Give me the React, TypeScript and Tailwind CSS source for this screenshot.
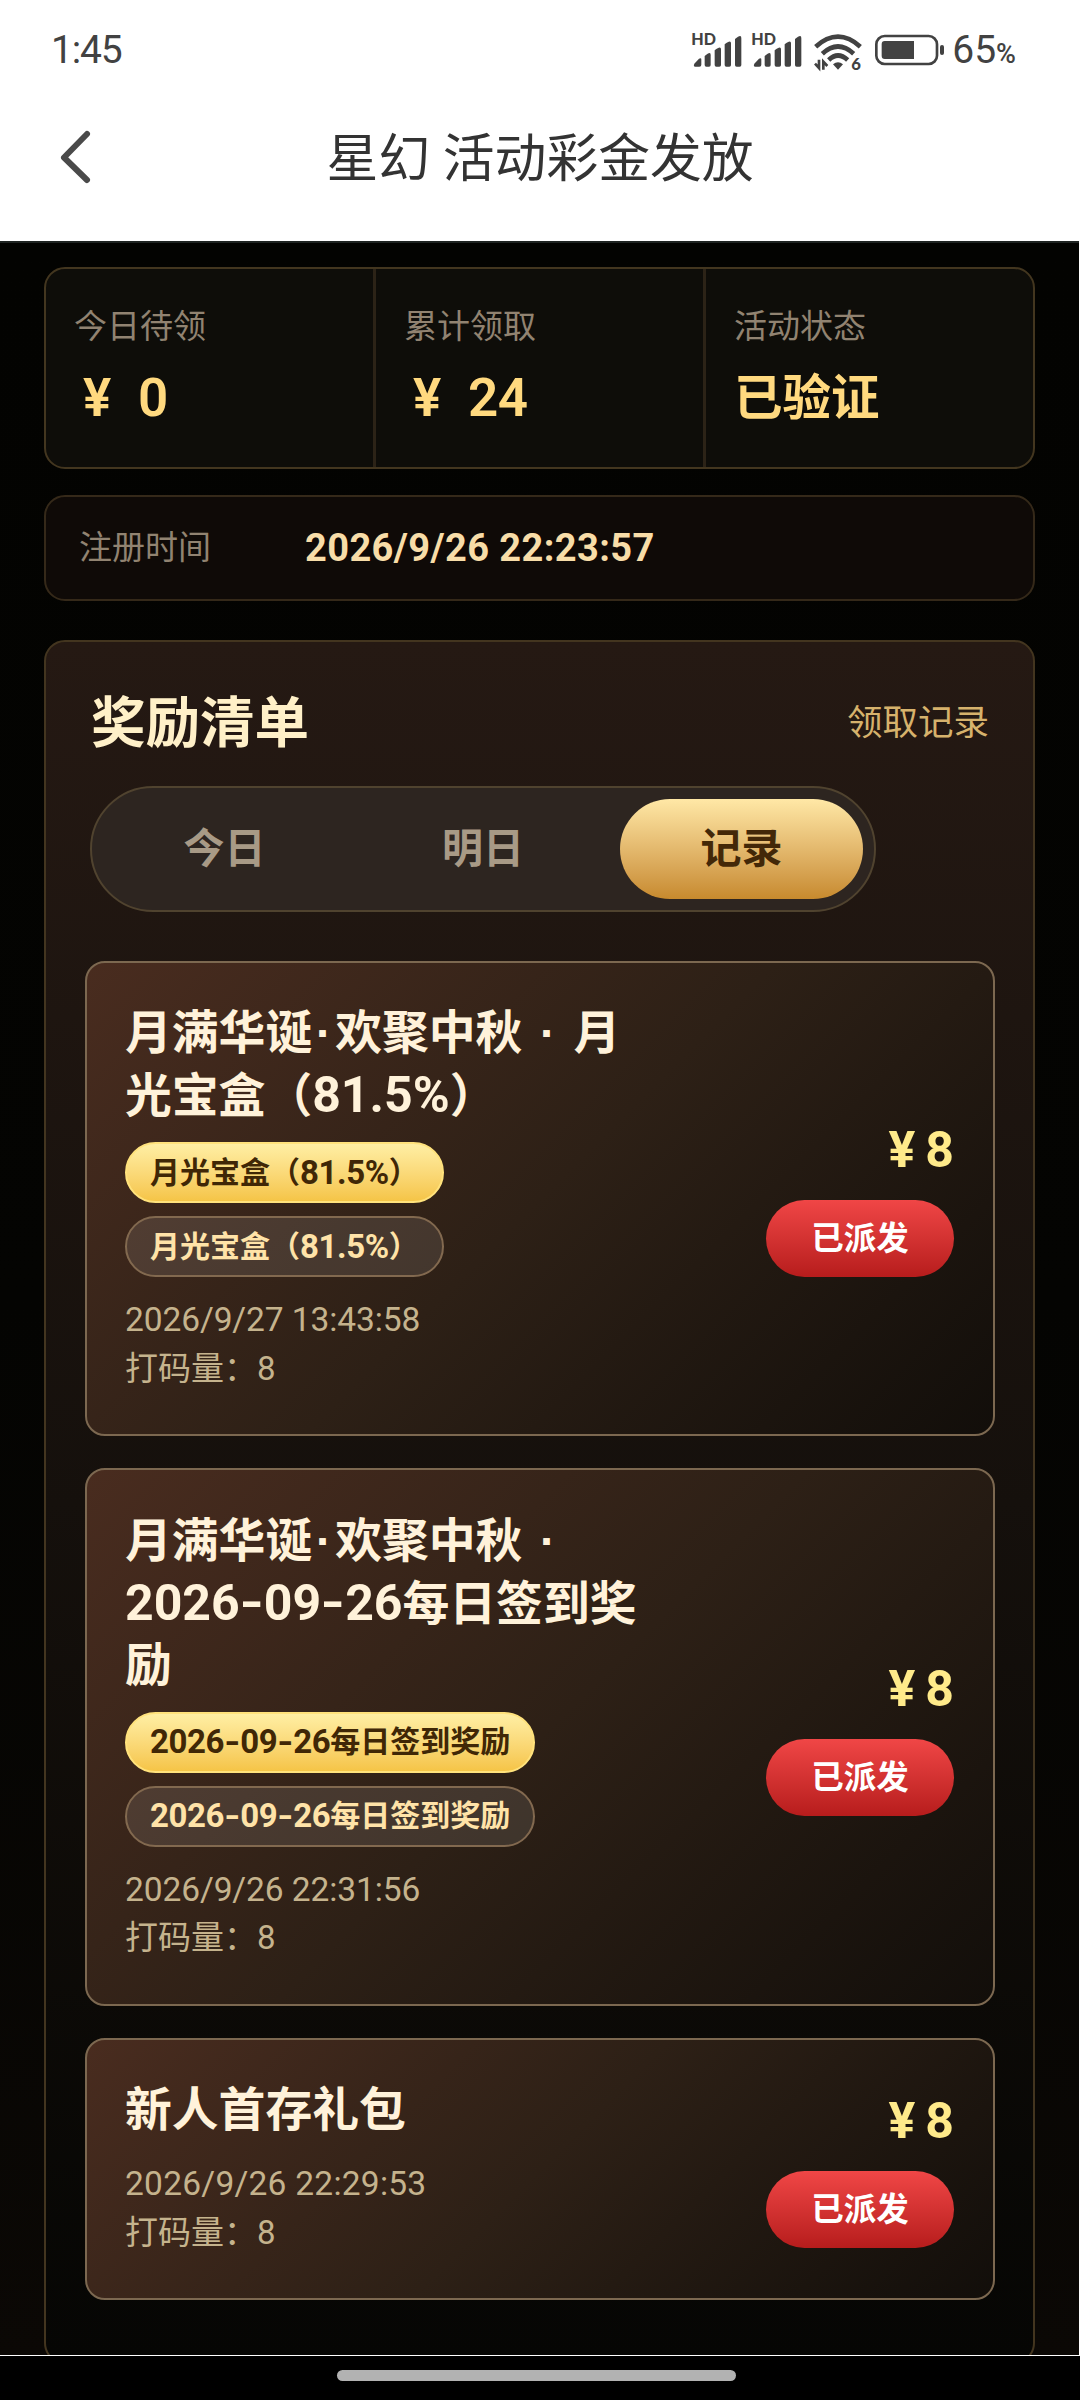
import React from "react";

type Part = { t: string; kind?: "num" | "dot" | "dash" | "gap" };

const face = "font-['Roboto','Noto_Sans_CJK_SC',sans-serif]";

function SignalIcon() {
  return (
    <svg width="52" height="36" viewBox="0 -6 156 108" className="shrink-0 overflow-visible">
      <text x="-2" y="34" fontFamily="Lato" fontWeight="900" fontSize="49" fill="#424242" textLength="74" lengthAdjust="spacingAndGlyphs">
        HD
      </text>
      <g fill="#424242">
        <path d="M7 89 L21 74 Q28 70 28 77 V92 Q28 98 22 98 H10 Q3 98 7 89Z" />
        <path d="M38 66 Q56 50 56 62 V93 Q56 98 51 98 H43 Q38 98 38 93Z" />
        <path d="M68 49 Q87 34 87 46 V93 Q87 98 82 98 H73 Q68 98 68 93Z" />
        <path d="M98 31 Q117 16 117 28 V93 Q117 98 112 98 H103 Q98 98 98 93Z" />
        <path d="M129 15 Q148 -1 148 12 V93 Q148 98 143 98 H134 Q129 98 129 93Z" />
      </g>
    </svg>
  );
}

function WifiIcon() {
  return (
    <svg width="48" height="38" viewBox="0 0 144 114" className="shrink-0 overflow-visible">
      <g fill="none" stroke="#424242" strokeWidth="14">
        <path d="M5 41 Q72 -19 139 41" />
        <path d="M25 62 Q72 19 119 62" />
        <path d="M44 81 Q72 54 101 81" />
      </g>
      <path d="M57 94 Q72 82 87 94 L72 110Z" fill="#424242" />
      <g stroke="#424242" strokeWidth="8" fill="none">
        <path d="M3 92 L15 105 V80" />
        <path d="M28 110 V86 L40 99" />
      </g>
      <text x="112" y="110" fontFamily="Lato" fontWeight="900" fontSize="50" fill="#424242">
        6
      </text>
    </svg>
  );
}

function BatteryIcon() {
  return (
    <svg width="70" height="32" viewBox="0 0 210 96" className="shrink-0">
      <rect x="4" y="6" width="182" height="84" rx="25" fill="none" stroke="#424242" strokeWidth="8" />
      <rect x="20" y="21" width="97" height="54" rx="9" fill="#424242" />
      <rect x="107" y="21" width="10" height="54" fill="#424242" />
      <rect x="195" y="33" width="12" height="30" rx="6" fill="#424242" />
    </svg>
  );
}

function Rich({ parts, numClass, dashClass }: { parts: Part[]; numClass: string; dashClass: string }) {
  return (
    <>
      {parts.map((p, i) => {
        if (p.kind === "num") return <span key={i} className={numClass}>{p.t}</span>;
        if (p.kind === "dot")
          return (
            <span key={i} className="inline-flex w-[23px] justify-center font-['Liberation_Sans'] leading-none">
              {p.t}
            </span>
          );
        if (p.kind === "gap") return <span key={i} className="inline-block w-[14px] whitespace-pre">{p.t}</span>;
        if (p.kind === "dash")
          return (
            <span key={i} className={`inline-block text-center ${dashClass}`}>
              <span className="inline-block scale-x-125">{p.t}</span>
            </span>
          );
        return <span key={i}>{p.t}</span>;
      })}
    </>
  );
}

const OPEN = "\uFF08";
const CLOSE = "\uFF09";
const COLON = "\uFF1A";

const dateParts: Part[] = [
  { t: "2026", kind: "num" },
  { t: "-", kind: "dash" },
  { t: "09", kind: "num" },
  { t: "-", kind: "dash" },
  { t: "26", kind: "num" },
];
const festival: Part[] = [
  { t: "月满华诞" },
  { t: "·", kind: "dot" },
  { t: "欢聚中秋" },
  { t: " ", kind: "gap" },
  { t: "·", kind: "dot" },
];
const odds: Part[] = [{ t: OPEN }, { t: "81.5%", kind: "num" }, { t: CLOSE }];
const moonBox: Part[] = [{ t: "月光宝盒" }, ...odds];
const signIn: Part[] = [...dateParts, { t: "每日签到奖励" }];

const rewards: { title: Part[][]; tag?: Part[]; time: string; height: string; timeTracking: string }[] = [
  {
    title: [
      [...festival, { t: " ", kind: "gap" }, { t: "月" }],
      [{ t: "光宝盒" }, ...odds],
    ],
    tag: moonBox,
    time: "2026/9/27 13:43:58",
    height: "h-[475px]",
    timeTracking: "tracking-[-0.1px]",
  },
  {
    title: [festival, [...dateParts, { t: "每日签到奖" }], [{ t: "励" }]],
    tag: signIn,
    time: "2026/9/26 22:31:56",
    height: "h-[538px]",
    timeTracking: "tracking-[-0.1px]",
  },
  {
    title: [[{ t: "新人首存礼包" }]],
    time: "2026/9/26 22:29:53",
    height: "h-[262px]",
    timeTracking: "tracking-[0.25px]",
  },
];

function Tag({ parts, filled }: { parts: Part[]; filled?: boolean }) {
  const look = filled
    ? "border-[#ffe27c] bg-linear-to-b from-[#fff0a6] to-[#f5c342] text-[#402706]"
    : "border-[#82694f] bg-white/10 text-[#ffe3a8]";
  return (
    <div
      className={`flex h-[61px] w-fit items-center rounded-full border-2 bg-origin-border px-[23px] text-[30px] leading-[56px] font-bold whitespace-nowrap ${face} ${look}`}
    >
      <Rich parts={parts} numClass="text-[33px] tracking-[-0.4px]" dashClass="text-[33px] w-[16px]" />
    </div>
  );
}

function RewardCard({ r }: { r: (typeof rewards)[number] }) {
  return (
    <article
      className={`flex items-center justify-between rounded-[20px] border-2 border-[#7c6850] bg-linear-135 from-[#492c1f] via-[#2d2016] to-[#120e0a] pr-[39px] pl-[38px] ${r.height}`}
    >
      <div>
        <h3 className={`text-[46.8px] leading-[62px] font-bold whitespace-nowrap text-[#fff2da] ${face}`}>
          {r.title.map((line, i) => (
            <div key={i} className="h-[62px]">
              <Rich parts={line} numClass="text-[50px]" dashClass="text-[50px] w-[24px]" />
            </div>
          ))}
        </h3>
        {r.tag && (
          <div className="mt-[16px] flex flex-col gap-[13px]">
            <Tag parts={r.tag} filled />
            <Tag parts={r.tag} />
          </div>
        )}
        <div className={`mt-[19px] pb-[2px] text-[33px] leading-[48.5px] whitespace-nowrap text-[#c5b38d] ${face}`}>
          <div className={`text-[33.5px] ${r.timeTracking}`}>{r.time}</div>
          <div>打码量{COLON}8</div>
        </div>
      </div>
      <div className="flex flex-col items-end gap-5">
        <div className={`flex h-[60px] items-center gap-[10px] text-[50px] leading-[60px] font-bold text-[#ffea8a] ${face}`}>
          <span>¥</span>
          <span>8</span>
        </div>
        <button
          className={`h-[77px] w-[188px] rounded-full bg-linear-to-b from-[#f04646] to-[#b71c1c] pt-px text-[32.5px] leading-[76px] font-bold text-white ${face}`}
        >
          已派发
        </button>
      </div>
    </article>
  );
}

function Stat({ label, children, last }: { label: string; children: React.ReactNode; last?: boolean }) {
  return (
    <div className={`flex-1 pt-[34px] pl-[28px] ${last ? "" : "border-r-[3px] border-[#2c2317]"}`}>
      <div className={`h-[48px] text-[33px] leading-[48px] text-[#918371] ${face}`}>{label}</div>
      <div className={`mt-[15px] flex h-[64px] items-center text-[48.5px] leading-[64px] font-bold text-[#ffd97f] ${face}`}>{children}</div>
    </div>
  );
}

function Money({ value }: { value: string }) {
  return (
    <span className={`flex pl-[9px] text-[53px] font-semibold ${face}`}>
      <span className="w-[55px]">¥</span>
      <span className="tracking-[-0.5px]">{value}</span>
    </span>
  );
}

export default function App() {
  return (
    <div className="flex h-[2400px] w-[1080px] flex-col overflow-hidden bg-white">
      <header className="h-[241px] shrink-0">
        <div className="flex h-[100px] items-center justify-between pr-[64px] pl-[51px] text-[#424242]">
          <span className={`text-[39px] leading-none tracking-[-1.2px] ${face}`}>1:45</span>
          <div className="flex h-full items-center">
            <SignalIcon />
            <span className="w-2" />
            <SignalIcon />
            <span className="w-[10px]" />
            <span className="pt-1"><WifiIcon /></span>
            <span className="w-[13px]" />
            <BatteryIcon />
            <span className={`ml-[7px] flex items-baseline text-[39px] leading-none ${face}`}>
              65<span className="text-[27px] font-medium">%</span>
            </span>
          </div>
        </div>
        <div className="grid h-[116px] grid-cols-[200px_1fr_200px] items-center">
          <svg width="34" height="56" viewBox="0 0 34 56" className="-mt-[2px] ml-[58px]">
            <path d="M29 5 L6 28.500 L29 51" fill="none" stroke="#4a4a4a" strokeWidth="6" strokeLinecap="round" strokeLinejoin="round" />
          </svg>
          <h1 className={`pt-[4px] text-center text-[51.800px] leading-[76px] whitespace-pre text-[#333] ${face}`}>星幻 活动彩金发放</h1>
        </div>
      </header>

      <main className="h-[2114px] w-[1079px] shrink-0 overflow-hidden border-t-2 border-[#1f2422] bg-linear-to-b from-[#030301] via-[#040402] to-[#0b0805] pr-[44px] pl-[44px]">
        <section className="mt-[24px] flex h-[202px] rounded-[21px] border-2 border-[#43361f] bg-[#0e0d09]">
          <Stat label="今日待领"><Money value="0" /></Stat>
          <Stat label="累计领取"><Money value="24" /></Stat>
          <Stat label="活动状态" last><span className="pt-[2px]">已验证</span></Stat>
        </section>

        <section className="mt-[26px] flex h-[106px] items-center rounded-[21px] border-2 border-[#352919] bg-[#0f0a07] pl-[33px]">
          <span className={`w-[226px] text-[33px] leading-[48px] text-[#918371] ${face}`}>注册时间</span>
          <span className={`text-[38px] font-bold tracking-[0.4px] text-[#f8dda8] ${face}`}>2026/9/26 22:23:57</span>
        </section>

        <section className="mt-[39px] h-[1724px] rounded-[21px] border-2 border-[#43351f] bg-linear-to-b from-[#251913] via-[#15100c] to-[#060604] pr-[38px] pl-[39px]">
          <div className="flex h-[144px] items-center justify-between pt-[18px] pr-[6px] pl-[6px]">
            <h2 className={`text-[54.500px] leading-[72px] font-bold text-[#fff0c8] ${face}`}>奖励清单</h2>
            <span className={`text-[35.500px] leading-[50px] text-[#d6b26c] ${face}`}>领取记录</span>
          </div>
          <nav className={`ml-[5px] flex h-[126px] w-[786px] items-center justify-between rounded-full border-2 border-[#50432f] bg-[#2d2520] px-[11px] text-[41px] font-bold text-[#a89a86] ${face}`}>
            <span className="flex h-[100px] w-[243px] items-center justify-center pt-[2px]">今日</span>
            <span className="flex h-[100px] w-[243px] items-center justify-center pt-[2px]">明日</span>
            <span className="flex h-[100px] w-[243px] items-center justify-center rounded-full bg-linear-to-b from-[#ffe8a6] to-[#c78a2d] pt-[2px] text-[#432808]">记录</span>
          </nav>
          <div className="mt-[49px] flex flex-col gap-[32px]">
            {rewards.map((r) => (
              <RewardCard key={r.time} r={r} />
            ))}
          </div>
        </section>
      </main>

      <footer className="mt-px flex h-[44px] shrink-0 justify-center bg-black pt-[14px]">
        <div className="mr-[7px] h-[11px] w-[399px] rounded-full bg-[#b2b2b2]" />
      </footer>
    </div>
  );
}
